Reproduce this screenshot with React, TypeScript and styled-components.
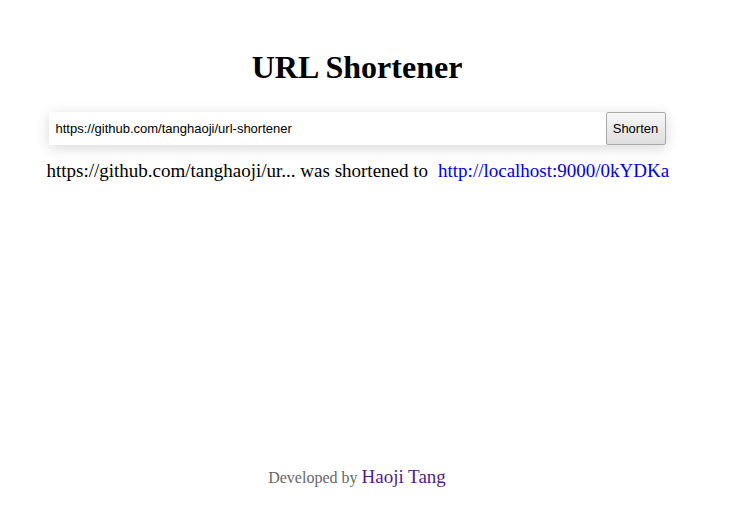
import React from "react";
import styled, { createGlobalStyle } from "styled-components";

const Global = createGlobalStyle`
  html, body { margin: 0; padding: 0; background: #fff; }
  body { font-family: "Liberation Serif", "Times New Roman", serif; color: #000; }
`;

const Page = styled.div`
  width: 714px;
  height: 524px;
  display: flex;
  flex-direction: column;
  align-items: center;
`;

const Title = styled.h1`
  margin: 47px 0 0;
  font-size: 32px;
  font-weight: bold;
  line-height: 40px;
`;

const Main = styled.div`
  width: 617px;
  margin-top: 25px;
  display: flex;
  flex-direction: column;
`;

const Form = styled.form`
  display: flex;
  height: 33px;
  box-shadow: 0 3px 14px rgba(0, 0, 0, 0.16);
`;

const Input = styled.input`
  flex: 1;
  border: none;
  outline: none;
  padding: 0 7px;
  font-family: "Liberation Sans", Arial, sans-serif;
  font-size: 13px;
  color: #000;
  background: #fff;
`;

const Button = styled.button`
  width: 60px;
  border: 1px solid #a9a9a9;
  border-radius: 2px;
  background: linear-gradient(#f6f6f6, #dedede);
  font-family: "Liberation Sans", Arial, sans-serif;
  font-size: 13px;
  color: #000;
  padding: 0;
`;

const Result = styled.p`
  margin: 12px 0 0 -2px;
  font-size: 19px;
  line-height: 28px;
  white-space: nowrap;
`;

const ShortLink = styled.a`
  color: #0000ee;
  text-decoration: none;
  margin-left: 10px;
`;

const Footer = styled.footer`
  margin-top: auto;
  margin-bottom: 36px;
  font-size: 16px;
  color: #666;
`;

const Author = styled.a`
  color: #551a8b;
  font-size: 19px;
  text-decoration: none;
`;

export default function App() {
  return (
    <>
      <Global />
      <Page>
        <Title>URL Shortener</Title>
        <Main>
          <Form onSubmit={(e) => e.preventDefault()}>
            <Input defaultValue="https://github.com/tanghaoji/url-shortener" />
            <Button type="submit">Shorten</Button>
          </Form>
          <Result>
            https://github.com/tanghaoji/ur... was shortened to
            <ShortLink href="#">http://localhost:9000/0kYDKa</ShortLink>
          </Result>
        </Main>
        <Footer>
          Developed by <Author href="#">Haoji Tang</Author>
        </Footer>
      </Page>
    </>
  );
}
